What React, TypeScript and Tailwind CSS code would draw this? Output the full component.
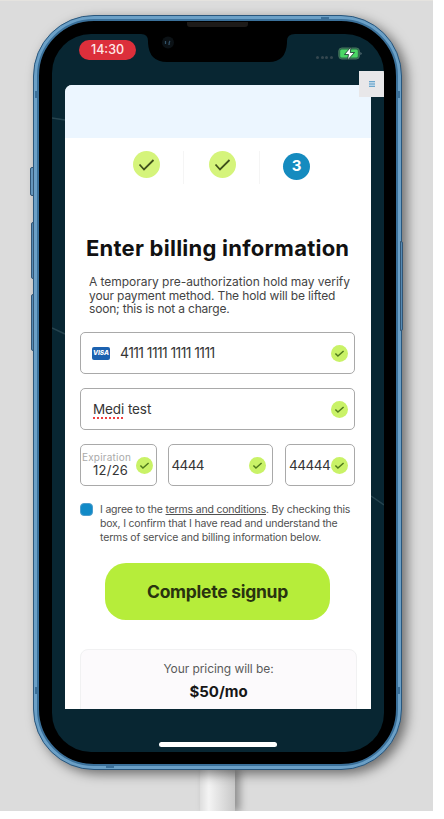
const CheckBadge = ({ large = false }: { large?: boolean }) => (
  <svg
    viewBox="0 0 27 27"
    className={large ? 'size-[27px] shrink-0' : 'size-[17px] shrink-0'}
    fill="none"
  >
    <circle cx="13.5" cy="13.5" r="13.5" fill={large ? '#d5f47b' : '#c9f267'} />
    <path
      d={large ? 'M6.5 13.5 11 18.5 20.5 9' : 'M7 13.5 11 17.5 20 9.5'}
      stroke={large ? '#41521c' : '#4f7a1c'}
      strokeWidth={large ? 1.8 : 2.3}
    />
  </svg>
);

const field = 'flex items-center rounded-[5px] border border-[#a9a9a9] bg-white text-[#353535]';

function BillingCard() {
  return (
    <section className="ml-[13px] mt-[51px] flex h-[624px] w-[306px] flex-col overflow-hidden rounded-t-[7px] bg-white">
      <div className="h-[53px] shrink-0 bg-[#ecf6ff]" />

      <div className="flex h-[52px] shrink-0 items-start pt-[13px]">
        <div className="flex w-[119px] justify-end border-r border-[#f5f5f5] pr-[23.5px] pb-[6px]">
          <CheckBadge large />
        </div>
        <div className="flex w-[76px] justify-end border-r border-[#f5f5f5] pr-[23.5px] pb-[6px]">
          <CheckBadge large />
        </div>
        <div className="ml-[23px] mt-[2px] flex size-[27px] items-center justify-center rounded-full bg-[#158bbf] text-[15px] font-bold text-white">
          3
        </div>
      </div>

      <h1 className="mt-[44px] ml-[21px] shrink-0 whitespace-nowrap text-[22px] leading-[28px] font-bold tracking-[0.24px] text-[#111]">
        Enter billing information
      </h1>

      <p className="mt-[13px] ml-[24px] shrink-0 whitespace-nowrap text-[12px] leading-[13.7px] text-[#444]">
        <span className="tracking-[-0.04px]">A temporary pre-authorization hold may verify</span>
        <br />
        <span className="tracking-[-0.13px]">your payment method. The hold will be lifted</span>
        <br />
        <span className="tracking-[-0.19px]">soon; this is not a charge.</span>
      </p>

      <div className="ml-[15px] mt-[16px] flex w-[275px] shrink-0 flex-col gap-[14px]">
        <div className={`${field} h-[42px] pr-[6px] pl-[11px]`}>
          <span className="flex h-[13px] w-[18px] items-center justify-center rounded-[2px] bg-[#1c62b0] text-[6.5px] leading-none font-extrabold text-white italic">
            VISA
          </span>
          <span className="ml-[10px] text-[14px] leading-[20px] tracking-[-0.6px]">4111 1111 1111 1111</span>
          <span className="ml-auto"><CheckBadge /></span>
        </div>
        <div className={`${field} h-[42px] pr-[6px] pl-[12px]`}>
          <span className="text-[13.5px] leading-[20px] tracking-[-0.1px]">
            <span className="underline decoration-[#f03e3e] decoration-dotted decoration-[1.5px] underline-offset-[3px]">Medi</span> test
          </span>
          <span className="ml-auto"><CheckBadge /></span>
        </div>
        <div className="flex justify-between">
          <div className={`${field} h-[42px] w-[77px] justify-between pr-[3px] pl-[1px]`}>
            <div className="flex w-[50px] flex-col">
              <span className="text-[10px] leading-[11px] tracking-[0.2px] text-[#aaa]">Expiration</span>
              <span className="ml-[11px] text-[13px] leading-[15px] tracking-[0.25px]">12/26</span>
            </div>
            <CheckBadge />
          </div>
          <div className={`${field} mr-[2px] h-[42px] w-[105px] justify-between pr-[6px] pl-[3px]`}>
            <span className="text-[13.5px] tracking-[-0.6px]">4444</span>
            <CheckBadge />
          </div>
          <div className={`${field} h-[42px] w-[70px] justify-between pr-[6px] pl-[3px]`}>
            <span className="text-[13.5px] tracking-[-0.5px]">44444</span>
            <CheckBadge />
          </div>
        </div>
      </div>

      <div className="mt-[17px] ml-[15px] flex shrink-0 items-start">
        <span className="size-[13px] rounded-[4px] border border-[#4d9dcd] bg-[#118ac7]" />
        <p className="ml-[7px] whitespace-nowrap text-[10.5px] leading-[13.7px] text-[#505050]">
          <span className="tracking-[-0.19px]">I agree to the <u>terms and conditions</u>. By checking this</span>
          <br />
          <span className="tracking-[-0.2px]">box, I confirm that I have read and understand the</span>
          <br />
          <span className="tracking-[-0.16px]">terms of service and billing information below.</span>
        </p>
      </div>

      <button className="mt-[19px] ml-[40px] h-[57px] w-[225px] shrink-0 rounded-[21px] bg-[#b6ed3a] text-[17.5px] font-bold tracking-[-0.27px] text-[#29330f]">
        Complete signup
      </button>

      <div className="mt-[29px] ml-[15px] flex h-[80px] w-[277px] shrink-0 flex-col items-center rounded-[8px] border border-[#f1f1f2] bg-[#fcfafc] pt-[10px]">
        <span className="text-[12px] leading-[17px] tracking-[-0.07px] text-[#5a5a5a]">Your pricing will be:</span>
        <span className="mt-[5px] text-[15px] leading-[20px] font-bold text-[#171717]">$50/mo</span>
      </div>
    </section>
  );
}

function StatusBar() {
  return (
    <>
      <div className="absolute top-[6px] left-[27px] flex h-[20px] w-[57px] items-center justify-center rounded-full bg-[#dc2f3b] text-[12.5px] font-medium text-[#ffe9e9]">
        14:30
      </div>
      <svg className="absolute top-0 left-[89px] h-[28px] w-[154px]" viewBox="0 0 154 28">
        <path d="M0 0Q7 0 7 7V9Q8 28 26 28H128Q145 28 146 9V7Q146 0 154 0Z" fill="#000" />
        <circle cx="27" cy="8.500" r="6" fill="#0b1115" />
        <path d="M24.5 7v3M29 7q-1 1-1 4" stroke="#34536a" strokeWidth="1.2" fill="none" />
      </svg>
      <div className="absolute top-[22px] left-[264px] flex gap-[1.5px]">
        {[0, 1, 2, 3].map((n) => (
          <i key={n} className="size-[3px] rounded-full bg-[#34474f]" />
        ))}
      </div>
      <svg className="absolute top-[12px] left-[286px] h-[15px] w-[25px]" viewBox="0 0 25 15">
        <rect x=".8" y="2" width="20.5" height="11" rx="3" fill="#2c6b4b" stroke="#45745d" />
        <rect x="2.2" y="3.4" width="17.6" height="8.2" rx="1.5" fill="#4bd765" />
        <path d="M22.5 6v3q1-.5 1-1.500T22.5 6" fill="#71858a" />
        <path d="M13 .8 6.500 8.500h4L9.500 14.200 16.500 6.500h-4.200Z" fill="#fff" stroke="#123428" strokeWidth=".8" />
      </svg>
    </>
  );
}

function FrameDetails() {
  return (
    <>
      <i className="absolute top-[151px] -left-[4px] h-[29px] w-[4px] rounded-l-[2px] border border-[#315575] bg-[#6596bc]" />
      <i className="absolute top-[206px] -left-[3px] h-[57px] w-[3px] rounded-l-[2px] border border-[#315575] bg-[#568bb5]" />
      <i className="absolute top-[278px] -left-[3px] h-[57px] w-[3px] rounded-l-[2px] border border-[#315575] bg-[#568bb5]" />
      <i className="absolute top-[225px] -right-[2px] h-[90px] w-[3px] rounded-r-[2px] border border-[#315575] bg-[#568bb5]" />
      <i className="absolute top-[75px] left-px h-[7px] w-[4px] bg-[#3c7099]" />
      <i className="absolute top-[75px] right-px h-[7px] w-[4px] bg-[#3c7099]" />
      <i className="absolute top-[671px] left-px h-[7px] w-[4px] bg-[#3c7099]" />
      <i className="absolute top-[671px] right-px h-[7px] w-[4px] bg-[#3c7099]" />
      <i className="absolute top-px left-[287px] h-[4px] w-[8px] bg-[#3c7099]" />
      <i className="absolute bottom-px left-[72px] h-[4px] w-[8px] bg-[#3c7099]" />
      <i className="absolute top-[6px] left-[153px] h-[5px] w-[61px] rounded-b-[3px] bg-[#1d1a18]" />
    </>
  );
}

export default function App() {
  return (
    <div className="h-[819px] w-[444px] overflow-hidden bg-white font-['Inter','Liberation_Sans',sans-serif]">
      <main className="flex h-[811px] w-[433px] flex-col overflow-hidden border-t border-[#e5e3df] bg-[#dcdcdc] pt-[14px]">
        <div className="relative z-10 ml-[33px] h-[755px] w-[369px] shrink-0 rounded-[61px] border border-[#29567c] bg-[#6ba0c7] p-[3px] shadow-[5px_4px_12px_rgba(0,0,0,0.5)]">
          <div className="h-full w-full rounded-[57px] border-2 border-[#3b719b] bg-black px-[13px] pt-[13px] pb-[12px]">
            <div className="relative h-[718px] w-[332px] overflow-hidden rounded-[39px] bg-[#082632]">
              <svg className="absolute inset-0 h-full w-full" viewBox="0 0 332 718" fill="none">
                <path d="M0 84 13 86M0 294l13 6M319 462l13 9" stroke="#26444f" strokeWidth="1.500" />
              </svg>
              <div className="relative flex h-full flex-col">
                <BillingCard />
              </div>
              <StatusBar />
              <div className="absolute top-[37px] right-0 flex h-[26px] w-[25px] items-center justify-center bg-[#e8e7e9]">
                <svg className="size-[6px]" viewBox="0 0 6 6">
                  <rect width="6" height="6" fill="#b9d3e6" />
                  <path d="M0 .5h6M0 3h6M0 5.500h6" stroke="#6ba5cb" strokeWidth="1" />
                </svg>
              </div>
              <div className="absolute bottom-[5px] left-[107px] h-[5px] w-[118px] rounded-full bg-white" />
            </div>
          </div>
          <FrameDetails />
        </div>
        <div className="ml-[200px] h-[42px] w-[35px] shrink-0 bg-linear-to-r from-[#dedede] via-[#f4f4f4] via-25% to-[#c8c8c8] shadow-[5px_0_8px_rgba(0,0,0,0.35)]" />
      </main>
    </div>
  );
}
